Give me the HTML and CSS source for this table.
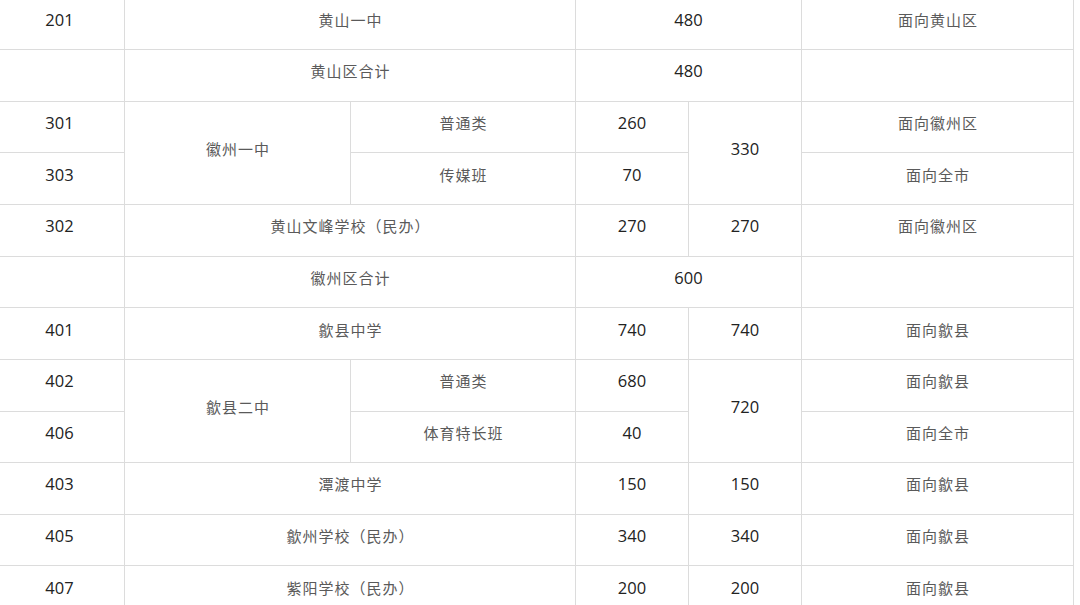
FILE: index.html
```html
<!DOCTYPE html>
<html lang="zh-CN">
<head>
<meta charset="utf-8">
<title>招生计划</title>
<link rel="stylesheet" href="styles.css">
</head>
<body>
<table class="plan">
  <colgroup>
    <col class="c-code"><col class="c-school"><col class="c-type"><col class="c-num"><col class="c-num"><col class="c-note">
  </colgroup>
  <tbody>
    <tr><td class="num">201</td><td class="zh" colspan="2">黄山一中</td><td class="num" colspan="2">480</td><td class="zh">面向黄山区</td></tr>
    <tr><td class="num"></td><td class="zh" colspan="2">黄山区合计</td><td class="num" colspan="2">480</td><td class="zh"></td></tr>
    <tr><td class="num">301</td><td class="zh" rowspan="2">徽州一中</td><td class="zh">普通类</td><td class="num">260</td><td class="num" rowspan="2">330</td><td class="zh">面向徽州区</td></tr>
    <tr><td class="num">303</td><td class="zh">传媒班</td><td class="num">70</td><td class="zh">面向全市</td></tr>
    <tr><td class="num">302</td><td class="zh" colspan="2">黄山文峰学校（民办）</td><td class="num">270</td><td class="num">270</td><td class="zh">面向徽州区</td></tr>
    <tr><td class="num"></td><td class="zh" colspan="2">徽州区合计</td><td class="num" colspan="2">600</td><td class="zh"></td></tr>
    <tr><td class="num">401</td><td class="zh" colspan="2">歙县中学</td><td class="num">740</td><td class="num">740</td><td class="zh">面向歙县</td></tr>
    <tr><td class="num">402</td><td class="zh" rowspan="2">歙县二中</td><td class="zh">普通类</td><td class="num">680</td><td class="num" rowspan="2">720</td><td class="zh">面向歙县</td></tr>
    <tr><td class="num">406</td><td class="zh">体育特长班</td><td class="num">40</td><td class="zh">面向全市</td></tr>
    <tr><td class="num">403</td><td class="zh" colspan="2">潭渡中学</td><td class="num">150</td><td class="num">150</td><td class="zh">面向歙县</td></tr>
    <tr><td class="num">405</td><td class="zh" colspan="2">歙州学校（民办）</td><td class="num">340</td><td class="num">340</td><td class="zh">面向歙县</td></tr>
    <tr><td class="num">407</td><td class="zh" colspan="2">紫阳学校（民办）</td><td class="num">200</td><td class="num">200</td><td class="zh">面向歙县</td></tr>
  </tbody>
</table>
</body>
</html>
```

FILE: styles.css
```css
html, body {
  margin: 0;
  padding: 0;
  background: #ffffff;
  overflow: hidden;
}

.plan {
  border-collapse: collapse;
  table-layout: fixed;
  width: 1074px;
  margin: -2.6px 0 0 -1px;
}

.c-code { width: 125px; }
.c-school { width: 226px; }
.c-type { width: 225px; }
.c-num { width: 113px; }
.c-note { width: 272px; }

.plan td {
  border: 1px solid #dcdcdc;
  height: 51.65px;
  padding: 0 0 9px 0;
  box-sizing: border-box;
  text-align: center;
  vertical-align: middle;
}

.plan tr td:first-child {
  border-left-color: transparent;
  padding-right: 5px;
}

.num {
  font-family: "Open Sans", "Noto Sans", sans-serif;
  font-size: 16.5px;
  color: #222222;
}

.zh {
  font-family: "Noto Sans CJK SC", "Noto Sans", sans-serif;
  font-size: 15px;
  font-weight: 400;
  letter-spacing: 1px;
  text-indent: 1px;
  color: #5a5a5a;
}
```
